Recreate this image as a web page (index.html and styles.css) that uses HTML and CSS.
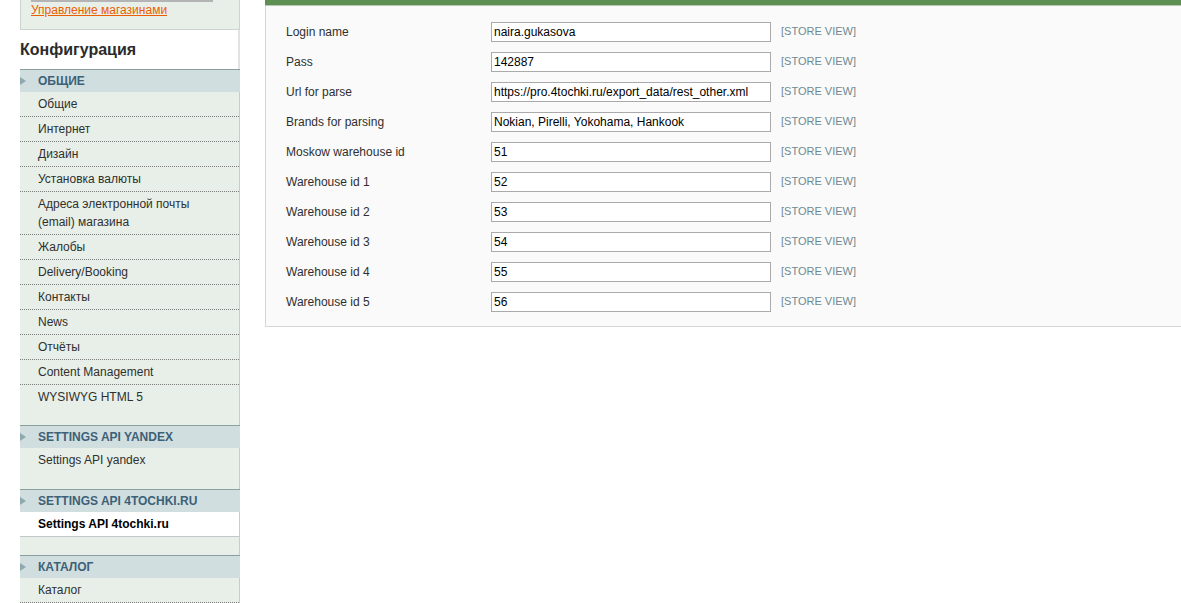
FILE: index.html
```html
<!DOCTYPE html>
<html lang="ru">
<head>
    <meta charset="UTF-8">
    <meta name="viewport" content="width=device-width, initial-scale=1.0">
    <title>Конфигурация</title>
    <link rel="stylesheet" href="styles.css">
</head>
<body>
    <div class="page">
        <!-- Левая колонка -->
        <div class="side-col">
            <!-- Переключатель магазина -->
            <div class="store-switcher">
                <div class="switcher-select"></div>
                <a href="#" class="switcher-link">Управление магазинами</a>
            </div>

            <h3 class="side-title">Конфигурация</h3>

            <div class="tab-group">
                <div class="tab-head">ОБЩИЕ</div>
                <ul class="tab-list">
                    <li><a href="#">Общие</a></li>
                    <li><a href="#">Интернет</a></li>
                    <li><a href="#">Дизайн</a></li>
                    <li><a href="#">Установка валюты</a></li>
                    <li><a href="#">Адреса электронной почты (email) магазина</a></li>
                    <li><a href="#">Жалобы</a></li>
                    <li><a href="#">Delivery/Booking</a></li>
                    <li><a href="#">Контакты</a></li>
                    <li><a href="#">News</a></li>
                    <li><a href="#">Отчёты</a></li>
                    <li><a href="#">Content Management</a></li>
                    <li><a href="#">WYSIWYG HTML 5</a></li>
                </ul>
            </div>

            <div class="tab-group">
                <div class="tab-head">SETTINGS API YANDEX</div>
                <ul class="tab-list tab-list-short">
                    <li><a href="#">Settings API yandex</a></li>
                </ul>
            </div>

            <div class="tab-group">
                <div class="tab-head">SETTINGS API 4TOCHKI.RU</div>
                <ul class="tab-list tab-list-current">
                    <li class="active"><a href="#">Settings API 4tochki.ru</a></li>
                </ul>
            </div>

            <!-- Список продолжается ниже края окна -->
            <div class="tab-group">
                <div class="tab-head">КАТАЛОГ</div>
                <ul class="tab-list tab-list-cut">
                    <li><a href="#">Каталог</a></li>
                </ul>
            </div>
        </div>

        <!-- Основная часть: форма настроек -->
        <div class="main-col">
            <div class="fieldset">
                <div class="fieldset-head"></div>
                <div class="form-rows">
                    <div class="form-row">
                        <label class="form-label">Login name</label>
                        <input class="form-input" type="text" value="naira.gukasova">
                        <span class="scope-label">[STORE VIEW]</span>
                    </div>
                    <div class="form-row">
                        <label class="form-label">Pass</label>
                        <input class="form-input" type="text" value="142887">
                        <span class="scope-label">[STORE VIEW]</span>
                    </div>
                    <div class="form-row">
                        <label class="form-label">Url for parse</label>
                        <input class="form-input" type="text" value="https://pro.4tochki.ru/export_data/rest_other.xml">
                        <span class="scope-label">[STORE VIEW]</span>
                    </div>
                    <div class="form-row">
                        <label class="form-label">Brands for parsing</label>
                        <input class="form-input" type="text" value="Nokian, Pirelli, Yokohama, Hankook">
                        <span class="scope-label">[STORE VIEW]</span>
                    </div>
                    <div class="form-row">
                        <label class="form-label">Moskow warehouse id</label>
                        <input class="form-input" type="text" value="51">
                        <span class="scope-label">[STORE VIEW]</span>
                    </div>
                    <div class="form-row">
                        <label class="form-label">Warehouse id 1</label>
                        <input class="form-input" type="text" value="52">
                        <span class="scope-label">[STORE VIEW]</span>
                    </div>
                    <div class="form-row">
                        <label class="form-label">Warehouse id 2</label>
                        <input class="form-input" type="text" value="53">
                        <span class="scope-label">[STORE VIEW]</span>
                    </div>
                    <div class="form-row">
                        <label class="form-label">Warehouse id 3</label>
                        <input class="form-input" type="text" value="54">
                        <span class="scope-label">[STORE VIEW]</span>
                    </div>
                    <div class="form-row">
                        <label class="form-label">Warehouse id 4</label>
                        <input class="form-input" type="text" value="55">
                        <span class="scope-label">[STORE VIEW]</span>
                    </div>
                    <div class="form-row">
                        <label class="form-label">Warehouse id 5</label>
                        <input class="form-input" type="text" value="56">
                        <span class="scope-label">[STORE VIEW]</span>
                    </div>
                </div>
            </div>
        </div>
    </div>
</body>
</html>
```

FILE: styles.css
```css
/* Базовые стили */
html,
body {
    height: 100%;
    overflow: hidden;
}

body {
    margin: 0;
    padding: 0;
    font-family: 'Liberation Sans', Arial, sans-serif;
    font-size: 12px;
    color: #2f2f2f;
    background: #ffffff;
}

.page {
    display: flex;
    align-items: flex-start;
    padding-left: 20px;
}

/* Левая колонка */
.side-col {
    width: 220px;
    flex-shrink: 0;
}

/* Переключатель магазина */
.store-switcher {
    background: #e7efe8;
    border: 1px solid #ccd5cc;
    border-top: none;
    padding: 0 10px 11px 10px;
}

.switcher-select {
    width: 182px;
    height: 2px;
    background: #b4b4b4;
}

.switcher-link {
    display: inline-block;
    margin-top: 1px;
    line-height: 15px;
    color: #eb5e00;
    text-decoration: underline;
}

.side-title {
    margin: 0;
    height: 39px;
    line-height: 40px;
    font-size: 16px;
    font-weight: bold;
    color: #2b2b2b;
    border-right: 2px solid #e2e2e2;
}

/* Группы вкладок */
.tab-head {
    display: flex;
    align-items: center;
    height: 22px;
    border-top: 1px solid #8d9e9f;
    background: #d1dedf;
    font-weight: bold;
    color: #3d6177;
}

.tab-head::before {
    content: '';
    width: 0;
    height: 0;
    border-left: 6px solid #8ea8b0;
    border-top: 4px solid transparent;
    border-bottom: 4px solid transparent;
    margin-right: 12px;
}

.tab-list {
    list-style: none;
    margin: 0;
    padding: 0 0 16px 0;
    background: #e7efe8;
    border-right: 1px solid #c3cece;
}

.tab-list a {
    display: block;
    padding: 3px 12px 3px 18px;
    line-height: 18px;
    color: #2f2f2f;
    text-decoration: none;
    border-bottom: 1px dotted #7c7c7c;
}

.tab-list li:last-child a {
    border-bottom: none;
}

.tab-list li.active a {
    background: #ffffff;
    font-weight: bold;
    color: #000000;
    border-bottom: 1px solid #bfc9c9;
}

.tab-list-short {
    padding-bottom: 17px;
}

.tab-list-current {
    padding-bottom: 18px;
}

/* Последняя группа обрезана нижним краем окна */
.tab-list-cut {
    padding-bottom: 0;
}

.tab-list-cut li:last-child a {
    border-bottom: 1px dotted #7c7c7c;
}

/* Основная часть */
.main-col {
    flex: 1;
    margin-left: 25px;
}

.fieldset-head {
    height: 5px;
    background: #5e8f53;
    border-bottom: 1px solid #b9c5b6;
}

.form-rows {
    padding: 11px 0 9px 20px;
    background: #fafafa;
    border-left: 1px solid #d6d6d6;
    border-bottom: 1px solid #d6d6d6;
}

.form-row {
    display: flex;
    align-items: center;
    height: 30px;
}

.form-label {
    width: 205px;
    color: #2f2f2f;
}

.form-input {
    box-sizing: border-box;
    width: 280px;
    height: 20px;
    margin: 0;
    padding: 0 2px;
    border: 1px solid #aaaaaa;
    background: #ffffff;
    font-family: 'Liberation Sans', Arial, sans-serif;
    font-size: 12px;
    color: #000000;
}

.scope-label {
    margin-left: 10px;
    margin-top: -2px;
    font-size: 11px;
    color: #6f8992;
}
```
